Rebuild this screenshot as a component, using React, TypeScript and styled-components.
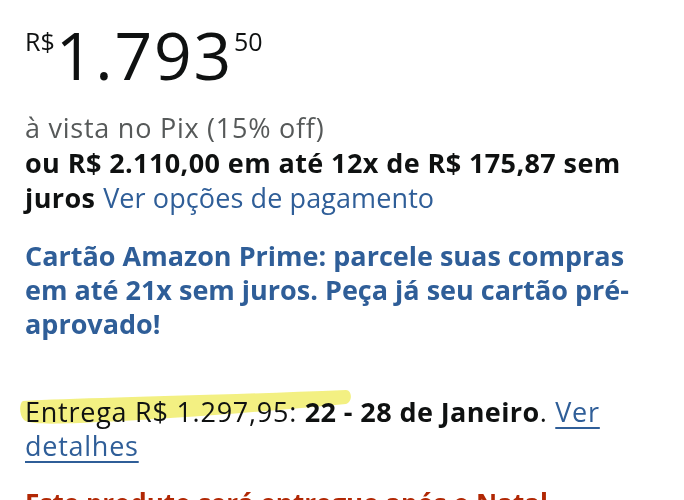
import React from "react";
import styled, { createGlobalStyle } from "styled-components";

const GlobalStyle = createGlobalStyle`
  body {
    margin: 0;
    background: #ffffff;
    overflow: hidden;
  }
`;

const Page = styled.div`
  font-family: "Open Sans", "Noto Sans", sans-serif;
  color: #0f1111;
  padding: 21px 25px 0 25px;
  font-size: 27px;
  letter-spacing: 0.75px;
`;

const PriceRow = styled.div`
  display: flex;
  align-items: flex-start;
  color: #0f1111;
  letter-spacing: 0;
`;

const Symbol = styled.span`
  font-size: 25px;
  line-height: 1;
  margin-top: 8px;
  margin-right: 1px;
`;

const Whole = styled.span`
  font-size: 66px;
  line-height: 1;
  letter-spacing: 1.8px;
`;

const Fraction = styled.span`
  font-size: 25px;
  line-height: 1;
  margin-top: 8px;
  margin-left: 1px;
`;

const Block = styled.div<{ $gap: number; $lh?: number }>`
  margin-top: ${(p) => p.$gap}px;
  line-height: ${(p) => p.$lh ?? 34}px;
`;

const Muted = styled.div`
  color: #565959;
`;

const Strong = styled.span`
  font-weight: 700;
  letter-spacing: 0.4px;
`;

const Link = styled.a<{ $underline?: boolean; $spacing?: number }>`
  color: #2f5e98;
  letter-spacing: ${(p) => (p.$spacing ?? 0.75)}px;
  text-decoration: ${(p) => (p.$underline ? "underline" : "none")};
  text-decoration-thickness: 2px;
  text-underline-offset: 5px;
  cursor: pointer;
`;

const Promo = styled.div`
  color: #2f5e98;
  font-weight: 700;
  letter-spacing: 0;
`;

const Delivery = styled.div`
  position: relative;
`;

const DeliveryText = styled.span`
  position: relative;
`;

const Highlight = styled.svg`
  position: absolute;
  left: -5px;
  top: -10px;
  width: 340px;
  height: 45px;
  pointer-events: none;
  mix-blend-mode: multiply;
  opacity: 0.85;
`;

const Warning = styled.div`
  color: #b12704;
  font-weight: 700;
  font-size: 26px;
  letter-spacing: 0;
`;

export default function App() {
  return (
    <>
      <GlobalStyle />
      <Page>
        <PriceRow>
          <Symbol>R$</Symbol>
          <Whole>1.793</Whole>
          <Fraction>50</Fraction>
        </PriceRow>

        <Block $gap={23} $lh={35}>
          <Muted>à vista no Pix (15% off)</Muted>
          <div>
            <Strong>ou R$ 2.110,00 em até 12x de R$ 175,87 sem juros</Strong>{" "}
            <Link $spacing={0.1}>Ver opções de pagamento</Link>
          </div>
        </Block>

        <Block $gap={24}>
          <Promo>
            Cartão Amazon Prime: parcele suas compras em até 21x sem juros. Peça já seu cartão
            pré-aprovado!
          </Promo>
        </Block>

        <Block $gap={54}>
          <Delivery>
            <Highlight viewBox="0 0 340 45">
              <path
                d="M3 16 C 60 13, 180 11, 326 5 C 332 5, 333 17, 326 19 C 250 26, 150 34, 80 37 C 40 39, 10 40, 4 35 C -1 30, -1 18, 3 16 Z"
                fill="#f1ee6c"
              />
            </Highlight>
            <DeliveryText>
              Entrega R$ 1.297,95: <Strong>22 - 28 de Janeiro</Strong>.{" "}
              <Link $underline>Ver detalhes</Link>
            </DeliveryText>
          </Delivery>
        </Block>

        <Block $gap={23}>
          <Warning>Este produto será entregue após o Natal</Warning>
        </Block>
      </Page>
    </>
  );
}
